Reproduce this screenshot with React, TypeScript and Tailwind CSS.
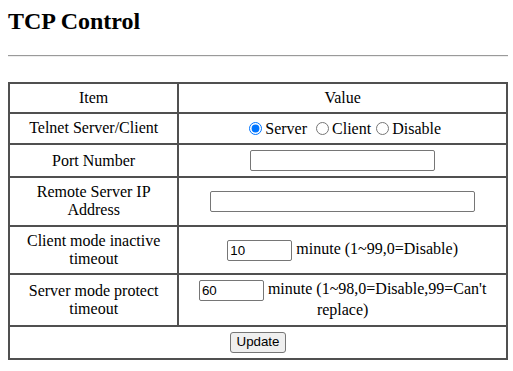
import React from 'react'

const cell = "border-2 border-[#505050] p-[5px] text-center align-middle"
const textInput = "bg-white border border-[#767676] rounded-[2px] px-[2px] py-[1px] h-[21px] text-[13.33px] text-black font-['Liberation_Sans',Arial,sans-serif] align-middle"
const radio = "m-[3px_3px_0_5px] w-[13px] h-[13px] align-[-1px]"

export default function App() {
    return (
        <div className="bg-white min-h-screen p-[8px] font-['Liberation_Serif','Times_New_Roman',serif] text-black text-[16px]">
            <div className="w-[500px]">
                <h2 className="text-[24px] font-bold leading-[27.6px] mb-[19px]">TCP Control</h2>
                <hr className="border-0 border-t border-t-[#9a9a9a] border-b border-b-[#eeeeee] mb-[25px]" />
                <table className="w-[500px] border-collapse border-2 border-[#505050] leading-[18.3px]">
                    <tbody>
                        <tr>
                            <td className={cell + " w-[34%]"}>Item</td>
                            <td className={cell}>Value</td>
                        </tr>
                        <tr>
                            <td className={cell}>Telnet Server/Client</td>
                            <td className={cell}>
                                <input type="radio" name="mode" defaultChecked className={radio} />Server{' '}
                                <input type="radio" name="mode" className={radio} />Client
                                <input type="radio" name="mode" className={radio} />Disable
                            </td>
                        </tr>
                        <tr>
                            <td className={cell}>Port Number</td>
                            <td className={cell}>
                                <input type="text" className={textInput + " w-[185px]"} />
                            </td>
                        </tr>
                        <tr>
                            <td className={cell}>Remote Server IP Address</td>
                            <td className={cell}>
                                <input type="text" className={textInput + " w-[265px]"} />
                            </td>
                        </tr>
                        <tr>
                            <td className={cell}>Client mode inactive timeout</td>
                            <td className={cell}>
                                <input type="text" defaultValue="10" className={textInput + " w-[65px]"} /> minute (1~99,0=Disable)
                            </td>
                        </tr>
                        <tr>
                            <td className={cell}>Server mode protect timeout</td>
                            <td className={cell}>
                                <input type="text" defaultValue="60" className={textInput + " w-[65px]"} /> minute (1~98,0=Disable,99=Can't replace)
                            </td>
                        </tr>
                        <tr>
                            <td className={cell} colSpan={2}>
                                <button className="bg-[#efefef] border border-[#767676] rounded-[3px] px-[6px] h-[21px] text-[13.33px] font-['Liberation_Sans',Arial,sans-serif] align-middle">
                                    Update
                                </button>
                            </td>
                        </tr>
                    </tbody>
                </table>
            </div>
        </div>
    )
}
